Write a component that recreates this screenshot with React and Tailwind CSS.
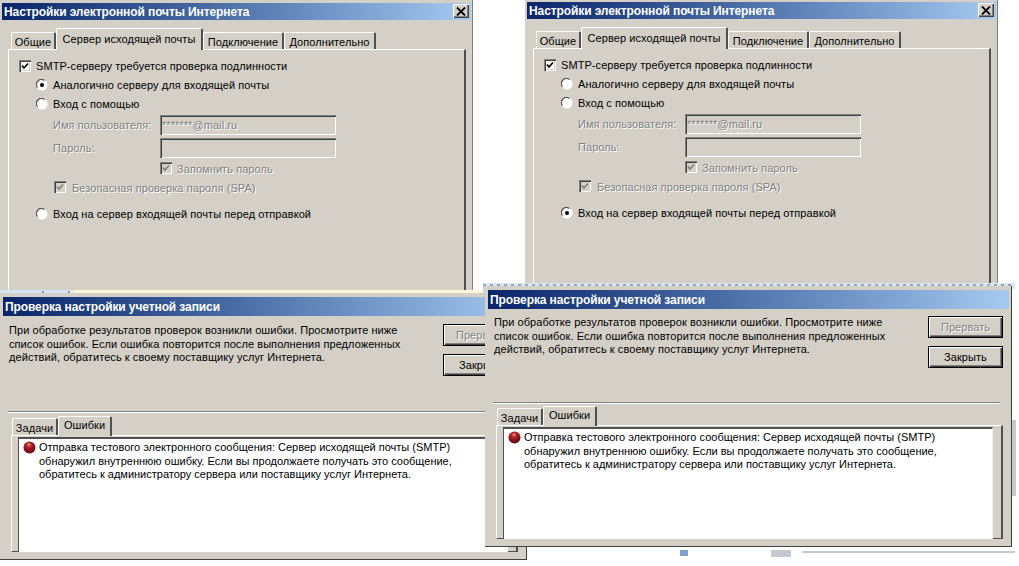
const face = "bg-[#d4d0c8]";
const sunken = "shadow-[inset_1px_1px_0_#808080,inset_2px_2px_0_#404040,inset_-1px_-1px_0_#ffffff,inset_-2px_-2px_0_#d4d0c8]";
const raised = "shadow-[inset_1px_1px_0_#ffffff,inset_-1px_-1px_0_#404040,inset_-2px_-2px_0_#808080]";
const disabledText = "text-[#808080] [text-shadow:1px_1px_0_#ffffff]";

function TitleBar({ children, className }) {
    return (
        <div className={`flex items-center justify-between bg-gradient-to-r from-[#0a246a] to-[#a6caf0] pl-[2px] pr-[2px] ${className}`}>
            <span className="text-[12px] font-bold tracking-[-0.1px] text-white whitespace-nowrap">{children}</span>
        </div>
    );
}

function CloseButton() {
    return (
        <div className={`flex items-center justify-center w-4 h-[14px] ${face} ${raised}`}>
            <svg width="10" height="9" viewBox="0 0 10 9">
                <path d="M1 0.5L9 8.5M9 0.5L1 8.5" stroke="#000" strokeWidth="1.8" />
            </svg>
        </div>
    );
}

function CheckBox({ disabled }) {
    return (
        <div className={`flex items-center justify-center w-3 h-3 shrink-0 ${disabled ? face : "bg-white"} ${sunken}`}>
            <svg width="8" height="8" viewBox="0 0 8 8">
                <path d="M1 3.5L3 6L7 1.5" fill="none" stroke={disabled ? "#808080" : "#000"} strokeWidth="1.7" />
            </svg>
        </div>
    );
}

function Radio({ checked }) {
    return (
        <svg width="12" height="12" viewBox="0 0 12 12" className="shrink-0">
            <circle cx="6" cy="6" r="5.5" fill="#ffffff" />
            <path d="M1.5 8.5A5 5 0 0 1 8.5 1.5" fill="none" stroke="#555" strokeWidth="1.2" />
            {checked && <circle cx="6" cy="6" r="2" fill="#000" />}
        </svg>
    );
}

function Field({ children }) {
    return (
        <div className={`flex items-center w-[176px] h-[20px] pl-[2px] shrink-0 ${disabledText} ${face} ${sunken}`}>
            {children}
        </div>
    );
}

function SettingsTab({ children, active, className }) {
    if (active) {
        return (
            <div className={`flex items-start justify-center h-[22px] pt-[2px] border-t border-l border-white rounded-t-[2px] border-r-2 border-r-[#505050] relative z-10 ${face} ${className}`}>
                {children}
            </div>
        );
    }
    return (
        <div className={`flex items-start justify-center h-[18px] pt-px border-t border-l border-white rounded-t-[2px] border-r-2 border-r-[#505050] ${face} ${className}`}>
            {children}
        </div>
    );
}

function SettingsWindow({ className, loginChecked }) {
    return (
        <div className={`absolute flex flex-col w-[473px] h-[300px] border-r border-[#808080] ${face} ${className}`}>
            <div className="h-[3px] shrink-0" />
            <div className="flex ml-[2px] mr-px h-[17px]">
                <TitleBar className="flex-1">Настройки электронной почты Интернета</TitleBar>
            </div>
            <div className="absolute top-[4px] right-[3px]">
                <CloseButton />
            </div>
            <div className="flex items-end ml-[11px] mt-[8px] h-[22px] shrink-0">
                <SettingsTab className="w-[45px]">Общие</SettingsTab>
                <SettingsTab active className="w-[147px]">Сервер исходящей почты</SettingsTab>
                <SettingsTab className="w-[81px]">Подключение</SettingsTab>
                <SettingsTab className="w-[92px]">Дополнительно</SettingsTab>
            </div>
            <div className="flex flex-col flex-1 ml-[8px] w-[458px] -mt-px border-l border-t border-white border-r-2 border-r-[#505050] pt-[7px]">
                <div className="flex items-center gap-[5px] h-[18px] pl-[10px]">
                    <CheckBox />
                    <span>SMTP-серверу требуется проверка подлинности</span>
                </div>
                <div className="flex items-center gap-[5px] h-[18px] mt-px pl-[27px]">
                    <Radio checked={!loginChecked} />
                    <span>Аналогично серверу для входящей почты</span>
                </div>
                <div className="flex items-center gap-[5px] h-[18px] mt-px pl-[27px]">
                    <Radio />
                    <span>Вход с помощью</span>
                </div>
                <div className="flex items-center h-[20px] mt-[2px] pl-[44px]">
                    <span className={`w-[107px] shrink-0 ${disabledText}`}>Имя пользователя:</span>
                    <Field>*******@mail.ru</Field>
                </div>
                <div className="flex items-center h-[20px] mt-[3px] pl-[44px]">
                    <span className={`w-[107px] shrink-0 ${disabledText}`}>Пароль:</span>
                    <Field />
                </div>
                <div className="flex items-center gap-[5px] h-[18px] mt-px pl-[151px]">
                    <CheckBox disabled />
                    <span className={`pt-[2px] ${disabledText}`}>Запомнить пароль</span>
                </div>
                <div className="flex items-center gap-[6px] h-[18px] mt-px pl-[45px]">
                    <CheckBox disabled />
                    <span className={`pt-[2px] ${disabledText}`}>Безопасная проверка пароля (SPA)</span>
                </div>
                <div className="flex items-center gap-[5px] h-[18px] mt-[9px] pl-[27px]">
                    <Radio checked={loginChecked} />
                    <span>Вход на сервер входящей почты перед отправкой</span>
                </div>
            </div>
        </div>
    );
}

function ErrorIcon({ id }) {
    return (
        <svg width="13" height="13" viewBox="0 0 13 13" className="shrink-0">
            <defs>
                <radialGradient id={id} cx="0.45" cy="0.3" r="0.7">
                    <stop offset="0" stopColor="#e05050" />
                    <stop offset="0.45" stopColor="#a01824" />
                    <stop offset="1" stopColor="#5a0a14" />
                </radialGradient>
            </defs>
            <circle cx="6.5" cy="6.5" r="6" fill={`url(#${id})`} />
            <circle cx="6" cy="3.5" r="1.3" fill="#d89060" />
        </svg>
    );
}

function DialogButton({ children, disabled }) {
    return (
        <div className={`flex items-center justify-center w-[75px] h-[22px] border border-black ${face} ${raised} ${disabled ? disabledText : ""}`}>
            {children}
        </div>
    );
}

function CheckDialog({ className, iconId, bodyTop, sepTop, tabsTop, listHeight }) {
    return (
        <div className={`absolute flex flex-col w-[527px] border-r border-b border-[#404040] pb-[7px] ${face} ${className}`}>
            <div className="flex mt-[4px] ml-[3px] mr-[2px] h-[19px] shrink-0">
                <TitleBar className="flex-1">Проверка настройки учетной записи</TitleBar>
            </div>
            <div className={`flex justify-between h-[52px] pl-[9px] pr-[8px] ${bodyTop}`}>
                <p className="leading-[13.5px] whitespace-nowrap">
                    При обработке результатов проверок возникли ошибки. Просмотрите ниже<br />
                    список ошибок. Если ошибка повторится после выполнения предложенных<br />
                    действий, обратитесь к своему поставщику услуг Интернета.
                </p>
                <div className="flex flex-col gap-2">
                    <DialogButton disabled>Прервать</DialogButton>
                    <DialogButton>Закрыть</DialogButton>
                </div>
            </div>
            <div className={`h-[2px] ml-[8px] w-[507px] border-t border-b border-t-[#808080] border-b-white ${sepTop}`} />
            <div className={`flex items-end ml-[12px] h-[20px] ${tabsTop}`}>
                <SettingsTab className="w-[46px]">Задачи</SettingsTab>
                <div className={`flex items-start justify-center w-[54px] h-[20px] pt-0 border-t border-l border-white rounded-t-[2px] border-r-2 border-r-[#505050] relative z-10 ${face}`}>
                    Ошибки
                </div>
            </div>
            <div className="ml-[11px] w-[507px] -mt-px border-l border-t border-white border-r-2 border-r-[#505050] border-b border-b-[#505050] pl-[6px] pr-[8px] pt-px">
                <div className={`flex gap-[3px] bg-white border-t-2 border-l border-[#505050] border-r border-r-[#f0f0f0] -mb-px pl-[4px] pt-[2px] ${listHeight}`}>
                    <ErrorIcon id={iconId} />
                    <p className="leading-[13.5px] tracking-normal whitespace-nowrap">
                        Отправка тестового электронного сообщения: Сервер исходящей почты (SMTP)<br />
                        обнаружил внутреннюю ошибку. Если вы продолжаете получать это сообщение,<br />
                        обратитесь к администратору сервера или поставщику услуг Интернета.
                    </p>
                </div>
            </div>
        </div>
    );
}

export default function App() {
    return (
        <div className="relative w-[1019px] h-[566px] overflow-hidden bg-white text-[11px] tracking-[0.07px] text-black font-['Liberation_Sans',sans-serif]">
            <SettingsWindow className="left-0 top-0" />
            <SettingsWindow className="left-[525px] -top-px" loginChecked />

            {/* scraps of the desktop showing round the dialogs */}
            <div className="absolute left-0 top-[290px] w-[485px] h-[6px] bg-gradient-to-r from-[#d8e4f4] from-[14%] to-[#fff8d8] to-[16%]" />
            <div className="absolute left-[42px] top-[291px] w-[28px] h-[3px] border-x-2 border-[#8a94a8]" />
            <div className="absolute left-[483px] top-[283px] w-[532px] h-[6px] bg-[#dbe6f2]" />
            <div className="absolute left-[483px] top-[284px] w-[532px] h-[3px] bg-[repeating-linear-gradient(90deg,#7f8a9e_0_3px,transparent_3px_7px)] opacity-70" />
            <div className="absolute left-[483px] top-[286px] w-[2px] h-[264px] bg-[#c4d4ec]" />
            <div className="absolute left-[1012px] top-[420px] w-[4px] h-[76px] bg-[#c8c8c8]" />
            <div className="absolute left-[680px] top-[550px] w-[8px] h-[6px] bg-[#7f9fcf]" />
            <div className="absolute left-[771px] top-[550px] w-[20px] h-[7px] bg-[#c4c8d0]" />
            <div className="absolute left-[802px] top-[551px] w-[213px] h-[2px] bg-[#c8c8c8]" />

            <CheckDialog
                className="left-0 top-[293px]"
                iconId="err-left"
                bodyTop="mt-[8px]"
                sepTop="mt-[35px]"
                tabsTop="mt-[3px]"
                listHeight="h-[115px]"
            />
            <CheckDialog
                className="left-[485px] top-[286px]"
                iconId="err-right"
                bodyTop="mt-[7px]"
                sepTop="mt-[34px]"
                tabsTop="mt-[2px]"
                listHeight="h-[112px]"
            />
        </div>
    );
}
